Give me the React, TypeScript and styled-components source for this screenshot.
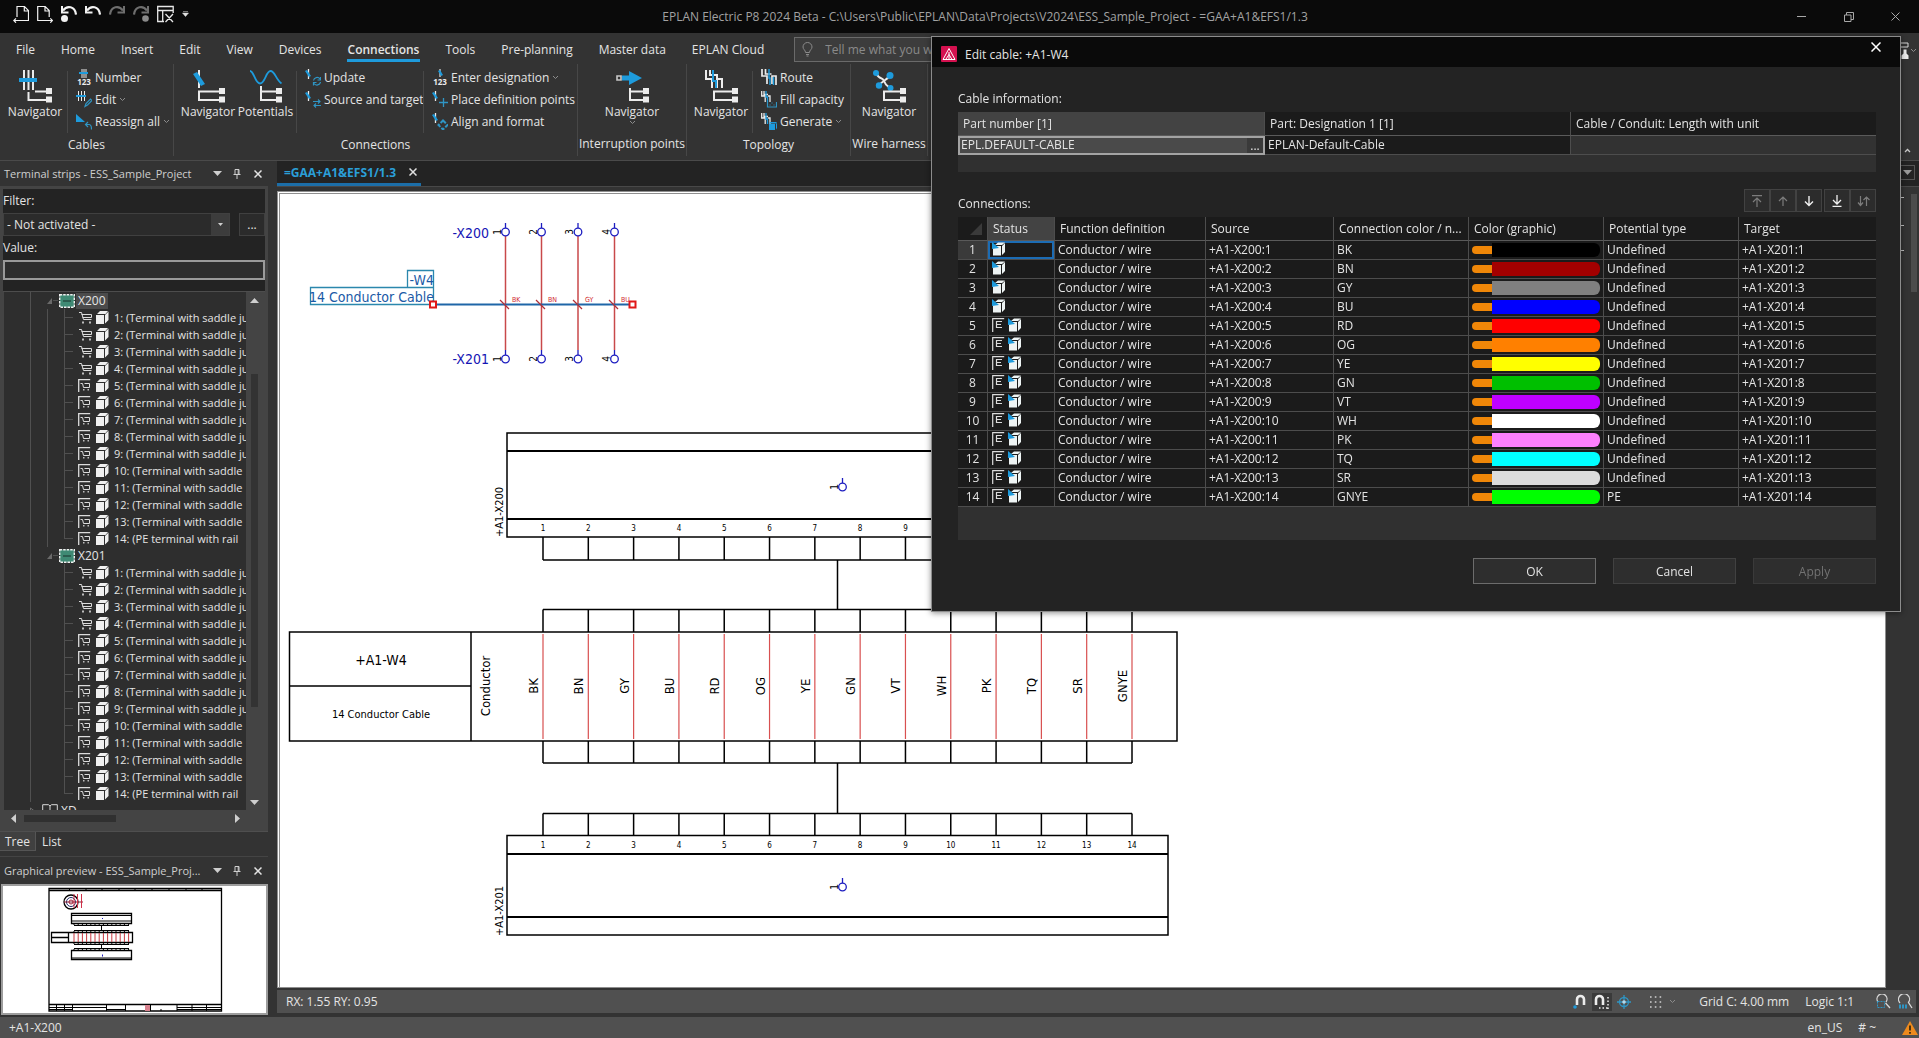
import React from "react";
import styled, { createGlobalStyle, css } from "styled-components";

const c = {
  black: "#0a0a0a",
  chrome: "#333333",
  deep: "#232323",
  cell: "#1b1b1b",
  tree: "#2e2e2e",
  frame: "#444444",
  status: "#505050",
  line: "#4d4d4d",
  text: "#e4e4e4",
  dim: "#8a8a8a",
  blue: "#1e9bdc",
  teal: "#2f95c4",
};

const GlobalStyle = createGlobalStyle`
  * { box-sizing: border-box; }
  body { margin: 0; background: ${c.chrome}; overflow: hidden; }
  body, button, input, select, table {
    font-family: "Open Sans", "Noto Sans", sans-serif;
    font-size: 12px;
    line-height: 17px;
    color: ${c.text};
  }
  button { background: none; border: 0; padding: 0; }
  svg { display: block; flex: none; }
`;

const Shell = styled.div`
  display: flex;
  flex-direction: column;
  height: 100vh;
  background: ${c.chrome};
  white-space: nowrap;
`;

/* ---------- title bar ---------- */

const TitleBar = styled.header`
  display: flex;
  height: 33px;
  background: ${c.black};
`;
const QuickAccess = styled.div`
  display: flex;
  gap: 8px;
  width: 192px;
  padding: 5px 0 0 13px;
`;
const AppTitle = styled.div`
  flex: 1;
  text-align: center;
  line-height: 33px;
  color: #a2a2a2;
`;
const CaptionButton = styled.button`
  display: flex;
  align-items: center;
  justify-content: center;
  width: 47px;
  color: #a8a8a8;
`;

/* ---------- ribbon ---------- */

const Ribbon = styled.div`
  height: 128px;
  border-bottom: 1px solid #4a4a4a;
  display: flex;
  flex-direction: column;
`;
const TabRow = styled.nav`
  display: flex;
  height: 31px;
  padding: 4px 0 0 3px;
`;
const RibbonTab = styled.button<{ $active?: boolean }>`
  display: flex;
  align-items: center;
  justify-content: center;
  padding: 2px 1px 0;
  margin: 0 12px;
  height: 25px;
  border-bottom: 3px solid ${(p) => (p.$active ? c.blue : "transparent")};
  font-weight: ${(p) => (p.$active ? 600 : 400)};
`;
const Search = styled.label`
  display: flex;
  align-items: center;
  gap: 12px;
  width: 320px;
  height: 25px;
  margin-left: 17px;
  padding-left: 7px;
  border: 1px solid #6a6a6a;
  background: #3c3c3c;
  color: ${c.dim};
`;
const SearchInput = styled.input`
  flex: 1;
  min-width: 0;
  border: 0;
  padding: 0;
  background: none;
  &::placeholder { color: ${c.dim}; }
`;
const Groups = styled.div`
  display: flex;
  height: 92px;
`;
const Group = styled.section<{ $w: number }>`
  display: flex;
  flex-direction: column;
  width: ${(p) => p.$w}px;
  border-right: 1px solid #474747;
`;
const GroupBody = styled.div<{ $center?: boolean }>`
  display: flex;
  height: 72px;
  padding: 2px 0 0 ${(p) => (p.$center ? 0 : 4)}px;
  justify-content: ${(p) => (p.$center ? "center" : "flex-start")};
`;
const GroupLabel = styled.div`
  text-align: center;
  line-height: 24px;
`;
const BigButton = styled.button<{ $w: number }>`
  display: flex;
  flex-direction: column;
  align-items: center;
  width: ${(p) => p.$w}px;
  padding-top: 4px;
`;
const ButtonStack = styled.div<{ $w: number }>`
  display: flex;
  flex-direction: column;
  width: ${(p) => p.$w}px;
`;
const Divider = styled.div<{ $before?: number }>`
  width: 1px;
  height: 62px;
  margin: 5px 0 0 ${(p) => p.$before ?? 0}px;
  background: #474747;
`;
const SmallButton = styled.button`
  display: flex;
  align-items: center;
  gap: 3px;
  height: 22px;
  padding-left: 8px;
`;
const RibbonEnd = styled.div`
  display: flex;
  flex-direction: column;
  justify-content: flex-end;
  align-items: center;
  margin-left: auto;
  width: 23px;
  padding-bottom: 3px;
  color: #c8c8c8;
`;
const UserButton = styled.button`
  display: flex;
  align-items: center;
  margin-left: auto;
  margin-right: 2px;
`;

/* ---------- body ---------- */

const Body = styled.main`
  display: flex;
  flex: 1;
  min-height: 0;
`;
const Dock = styled.aside`
  display: flex;
  flex-direction: column;
  width: 268px;
  margin-right: 9px;
  padding-bottom: 2px;
`;
const PanelTitle = styled.div<{ $h: number }>`
  display: flex;
  align-items: center;
  gap: 10px;
  height: ${(p) => p.$h}px;
  padding: 0 4px 0 4px;
  color: #cfcfcf;
`;
const PanelName = styled.span`
  flex: 1;
  min-width: 0;
  font-size: 11px;
`;
const IconButton = styled.button`
  display: flex;
  align-items: center;
  justify-content: center;
  width: 9px;
  height: 16px;
  &:last-child { width: 14px; margin-right: -1px; }
`;
const Frame = styled.div`
  display: flex;
  flex-direction: column;
  flex: 1;
  min-height: 0;
  border: solid ${c.frame};
  border-width: 3px 3px 0 3px;
`;
const FilterBox = styled.form`
  display: flex;
  flex-direction: column;
  height: 102px;
  background: ${c.deep};
`;
const FieldLabel = styled.label`
  line-height: 24px;
`;
const FieldRow = styled.div`
  display: flex;
  height: 23px;
  gap: 9px;
`;
const SelectWrap = styled.div`
  display: flex;
  align-items: center;
  flex: 1;
  border: 1px solid #404040;
  background: #2b2b2b;
`;
const Select = styled.select`
  flex: 1;
  appearance: none;
  border: 0;
  padding: 0 3px;
  background: none;
  outline: none;
`;
const SelectArrow = styled.div`
  display: flex;
  align-items: center;
  justify-content: center;
  width: 18px;
  align-self: stretch;
  background: #3c3c3c;
`;
const MoreButton = styled.button`
  width: 26px;
  border: 1px solid #404040;
  background: #2b2b2b;
`;
const ValueInput = styled.input`
  width: 100%;
  height: 20px;
  border: 2px solid #9a9a9a;
  background: #2e2e2e;
  outline: none;
`;
const TreeArea = styled.div`
  display: flex;
  flex: 1;
  min-height: 0;
  border-top: 1px solid ${c.line};
`;
const Tree = styled.ul`
  flex: 1;
  min-width: 0;
  margin: 0;
  padding: 0 0 0 26px;
  list-style: none;
  overflow: hidden;
  background: ${c.tree};
  border-left: 1px solid #444;
`;
const TreeRow = styled.li`
  display: flex;
  align-items: center;
  height: 17px;
`;
const Guide = styled.span<{ $v?: "full" | "half" | "none"; $tick?: boolean }>`
  flex: none;
  width: 17px;
  height: 17px;
  background:
    linear-gradient(#505050, #505050) 0 0 / 1px ${(p) => (p.$v === "half" ? "50%" : p.$v === "none" ? "0" : "100%")} no-repeat,
    linear-gradient(#505050, #505050) 0 50% / ${(p) => (p.$tick ? "9px" : "0")} 1px no-repeat;
`;
const NodeArrow = styled.span`
  display: flex;
  align-items: center;
  flex: none;
  width: 12px;
  height: 17px;
`;
const NodeName = styled.span<{ $selected?: boolean }>`
  padding: 0 2px;
  margin-left: 1px;
  line-height: 16px;
  background: ${(p) => (p.$selected ? "#4b4b4b" : "transparent")};
`;
const LeafName = styled.span`
  font-size: 11px;
`;
const LeafIcons = styled.span`
  display: flex;
  gap: 3px;
  margin-right: 5px;
  margin-left: -3px;
`;
const VScroll = styled.div`
  display: flex;
  flex-direction: column;
  align-items: center;
  width: 19px;
  padding: 6px 3px 5px 0;
  background: ${c.frame};
`;
const VThumb = styled.div`
  width: 7px;
  height: 333px;
  margin-top: 71px;
  margin-bottom: auto;
  background: #333;
`;
const HScroll = styled.div`
  display: flex;
  align-items: center;
  height: 21px;
  padding: 0 25px 4px 8px;
  background: ${c.frame};
`;
const HThumb = styled.div`
  width: 92px;
  height: 7px;
  margin-left: 8px;
  margin-right: auto;
  background: #303030;
`;
const ViewTabs = styled.div`
  display: flex;
  height: 25px;
  padding-bottom: 5px;
  border-top: 1px solid #4f4f4f;
`;
const ViewTab = styled.button<{ $active?: boolean }>`
  padding: 0 6px;
  ${(p) =>
    p.$active &&
    css`
      background: #404040;
      border: solid #555;
      border-width: 0 1px 1px 0;
      padding: 0 5px;
    `}
`;
const PreviewBox = styled.div`
  height: 131px;
  border: 2px solid #9d9d9d;
  background: #fff;
  overflow: hidden;
  margin-left: 1px;
`;
const PreviewPanel = styled.div`
  border-top: 1px solid #444;
`;

/* ---------- document ---------- */

const Doc = styled.section`
  display: flex;
  flex-direction: column;
  flex: 1;
  min-width: 0;
`;
const DocTabs = styled.div`
  display: flex;
  justify-content: space-between;
  height: 26px;
  border-bottom: 1px solid #484848;
  background: ${c.deep};
`;
const DocTab = styled.button`
  display: flex;
  align-items: center;
  gap: 13px;
  padding: 0 4px 0 7px;
  border-bottom: 3px solid #1c6ea8;
  font-weight: 700;
  color: #2b9fd8;
`;
const TabListButton = styled.button`
  display: flex;
  align-items: center;
  justify-content: center;
  width: 15px;
  height: 15px;
  margin: 4px 4px 0 0;
  border: 1px solid #555;
`;
const CanvasRow = styled.div`
  display: flex;
  flex: 1;
  min-height: 0;
  padding-top: 4px;
`;
const Canvas = styled.div`
  flex: 1;
  min-width: 0;
  border: solid #8e8e8e;
  border-width: 3px 1px 1px 3px;
  border-style: double solid solid double;
  background: #fff;
  overflow: hidden;
`;
const SideDock = styled.aside`
  display: flex;
  justify-content: flex-end;
  gap: 7px;
  width: 33px;
  padding: 3px 2px 0 0;
`;
const SideThumb = styled.div`
  width: 6px;
  height: 98px;
  background: #4c4c4c;
`;
const DocStatus = styled.div`
  display: flex;
  align-items: center;
  height: 23px;
  margin: 2px 3px 4px 0;
  padding: 0 3px 0 9px;
  background: ${c.status};
`;
const Spacer = styled.span`
  flex: 1;
`;
const StatusTools = styled.div`
  display: flex;
  align-items: center;
  gap: 2px;
  margin-right: 16px;
`;
const ToolToggle = styled.button<{ $on?: boolean }>`
  display: flex;
  align-items: center;
  justify-content: center;
  width: 20px;
  height: 18px;
  background: ${(p) => (p.$on ? "#3a3a3a" : "transparent")};
`;
const StatusText = styled.span<{ $gap: number }>`
  margin-right: ${(p) => p.$gap}px;
`;
const AppStatus = styled.footer`
  display: flex;
  align-items: center;
  height: 21px;
  padding: 0 1px 0 9px;
  background: ${c.status};
`;

/* ---------- dialog ---------- */

const Dialog = styled.div`
  position: fixed;
  top: 36px;
  right: 18px;
  width: 970px;
  display: flex;
  flex-direction: column;
  border: 1px solid #8c8c8c;
  background: ${c.deep};
  box-shadow: 0 1px 6px rgba(0, 0, 0, 0.45);
`;
const DialogTitle = styled.div`
  display: flex;
  align-items: center;
  gap: 8px;
  height: 30px;
  padding: 4px 19px 0 9px;
  background: ${c.black};
`;
const DialogClose = styled.button`
  margin: -14px 0 0 auto;
`;
const DialogBody = styled.div`
  display: flex;
  flex-direction: column;
  padding: 22px 24px 27px 26px;
`;
const SectionHead = styled.div<{ $h: number }>`
  display: flex;
  align-items: flex-end;
  justify-content: space-between;
  height: ${(p) => p.$h}px;
  padding-bottom: 5px;
`;
const SortBar = styled.div`
  display: flex;
`;
const SortButton = styled.button<{ $apart?: boolean; $off?: boolean }>`
  display: flex;
  align-items: center;
  justify-content: center;
  width: 26px;
  height: 23px;
  margin-left: ${(p) => (p.$apart ? 2 : 0)}px;
  border: 1px solid #424242;
  background: #2c2c2c;
  color: ${(p) => (p.$off ? "#7c7c7c" : "#f0f0f0")};
`;
const Grid = styled.div<{ $pad: number }>`
  padding-bottom: ${(p) => p.$pad}px;
  background: #303030;
`;
const Table = styled.table`
  width: 100%;
  table-layout: fixed;
  border-collapse: separate;
  border-spacing: 0;
`;
const HeadCell = styled.th<{ $hot?: boolean }>`
  height: 24px;
  padding: 0 5px;
  border-right: 1px solid ${c.line};
  border-bottom: 1px solid #5a5a5a;
  background: ${(p) => (p.$hot ? "#434343" : c.cell)};
  font-weight: 400;
  text-align: left;
  &:last-child { border-right: 0; }
`;
const Cell = styled.td<{ $blank?: boolean }>`
  height: 19px;
  padding: 0 3px;
  line-height: 18px;
  border-right: 1px solid ${c.line};
  border-bottom: 1px solid ${c.line};
  background: ${(p) => (p.$blank ? "#323232" : c.cell)};
  &:last-child { border-right: 0; }
`;
const RowHead = styled.th<{ $hot?: boolean }>`
  height: 19px;
  padding: 0;
  line-height: 18px;
  font-weight: 400;
  border-right: 1px solid ${c.line};
  border-bottom: 1px solid ${c.line};
  background: ${(p) => (p.$hot ? "#3a3a3a" : c.cell)};
`;
const StatusCell = styled(Cell)<{ $focus?: boolean }>`
  padding: 0 4px;
  box-shadow: ${(p) => (p.$focus ? "inset 0 0 0 2px #1c6cb4" : "none")};
`;
const StatusIcons = styled.div`
  display: flex;
  gap: 3px;
  height: 18px;
  padding-top: 1px;
`;
const EditCell = styled.td`
  height: 19px;
  padding: 0;
  background: #4a4a4a;
`;
const EditBox = styled.div`
  display: flex;
  height: 19px;
  border: 2px solid #a3a3a3;
`;
const EditInput = styled.input`
  flex: 1;
  min-width: 0;
  height: 14px;
  line-height: 14px;
  border: 0;
  padding: 0 1px;
  background: none;
  outline: none;
`;
const EditMore = styled.button`
  width: 16px;
  line-height: 13px;
  background: #3a3a3a;
`;
const Wire = styled.div`
  display: flex;
  align-items: center;
  height: 18px;
`;
const WireTip = styled.span`
  width: 20px;
  height: 8px;
  border-radius: 4px 0 0 4px;
  background: #f08708;
`;
const WireBody = styled.span<{ $color: string }>`
  flex: 1;
  height: 14px;
  border-radius: 0 6px 6px 0;
  background: ${(p) => p.$color};
`;
const Actions = styled.div`
  display: flex;
  justify-content: flex-end;
  gap: 17px;
  padding-top: 18px;
`;
const ActionButton = styled.button<{ $primary?: boolean }>`
  width: 123px;
  height: 26px;
  border: 1px solid ${(p) => (p.$primary ? "#6c6c6c" : "#414141")};
  background: #2e2e2e;
  &:disabled { color: #737373; border-color: #3a3a3a; }
`;

/* ---------- icons ---------- */

const Svg = ({ w, h, children }: { w: number; h: number; children: React.ReactNode }) => (
  <svg width={w} height={h} viewBox={`0 0 ${w} ${h}`} fill="none" aria-hidden="true">
    {children}
  </svg>
);

const Down = ({ w = 9, h = 5, fill = "#cfcfcf" }) => (
  <Svg w={w} h={h}>
    <path d={`M0 0H${w}L${w / 2} ${h}Z`} fill={fill} />
  </Svg>
);
const Chevron = () => (
  <Svg w={7} h={5}>
    <path d="M1 1l2.5 2.5L6 1" stroke="#8c8c8c" />
  </Svg>
);
const Cross = ({ s = 8, stroke = "currentColor", sw = 1.5 }) => (
  <Svg w={s} h={s}>
    <path d={`M.5 .5L${s - 0.5} ${s - 0.5}M${s - 0.5} .5L.5 ${s - 0.5}`} stroke={stroke} strokeWidth={sw} />
  </Svg>
);
const Pin = () => (
  <Svg w={8} h={10}>
    <path d="M2 .5h4v5H2zM5.2 .5v5M.5 5.5h7M4 5.5V10" stroke="#cfcfcf" />
  </Svg>
);

const PageIcon = ({ next }: { next?: boolean }) => (
  <Svg w={16} h={18}>
    {next ? (
      <path d="M11.5 15.5H.7V1.5h7.500l4 4V12M8 1.500V6h4M8 15.500h7.500M13.300 13.300l2.200 2.200-2.200 2.200" stroke="#f2f2f2" strokeWidth="1.2" />
    ) : (
      <path d="M4 12V1.500h7.500l4 4v10H1M11.300 1.500V6h4M3 13.300L.8 15.500 3 17.700" stroke="#f2f2f2" strokeWidth="1.2" />
    )}
  </Svg>
);
const UndoIcon = ({ dot }: { dot?: boolean }) => (
  <Svg w={16} h={18}>
    <path d="M2 5.500C6 0 14 1 15 9.500" stroke="#f2f2f2" strokeWidth="2.200" />
    <path d="M1 1v6.500H7.500" stroke="#f2f2f2" strokeWidth="2" />
    {dot && <circle cx="3.500" cy="13.500" r="3.500" fill="#f2f2f2" />}
  </Svg>
);
const RedoIcon = ({ dot }: { dot?: boolean }) => (
  <Svg w={16} h={18}>
    <path d="M14 5.500C10 0 2 1 1 9.500" stroke="#6e6e6e" strokeWidth="2.200" />
    <path d="M15 1v6.500H8.500" stroke="#6e6e6e" strokeWidth="2" />
    {dot && <circle cx="12.500" cy="13.500" r="3.300" fill="#8a8a8a" />}
  </Svg>
);
const CloseLayoutIcon = () => (
  <Svg w={17} h={18}>
    <path d="M7 16.500H.7V1.500h15.500V8M.7 5.500h15.500M5.700 5.500v11M8.500 9l7.500 8M16 9l-7.500 8" stroke="#e8e8e8" strokeWidth="1.300" />
  </Svg>
);

/* tree of two nodes that stands in the lower right of the big ribbon icons */
const Prongs = ({ x, top = 18, upper = x }: { x: number; top?: number; upper?: number }) => (
  <>
    <path d={`M${x} ${top}V30H27M${upper} 21.500H27`} stroke="#ececec" strokeWidth="2" />
    <path d="M27 18h6v6h-6zM27 26.500h6v6h-6z" fill="#ececec" />
  </>
);
const CableBig = () => (
  <Svg w={33} h={33}>
    <path d="M5 0v20M9.500 0v20M14 0v20" stroke="#ececec" strokeWidth="2" />
    <path d="M0 8h18v4H0z" fill={c.blue} />
    <Prongs x={9.5} top={22} upper={16} />
  </Svg>
);
const ConnBig = () => (
  <Svg w={33} h={33}>
    <path d="M7 0v18" stroke="#ececec" strokeWidth="2" />
    <path d="M1 4l4-2 8 12-4 2z" fill={c.blue} />
    <Prongs x={7} top={20.5} />
  </Svg>
);
const PotentialBig = () => (
  <Svg w={33} h={33}>
    <path d="M1 1c4 0 5 12.500 10 12.500S17 1 21.500 1 27 10 32.500 13.500" stroke={c.blue} strokeWidth="1.800" />
    <Prongs x={12} top={16} />
  </Svg>
);
const InterruptBig = () => (
  <Svg w={33} h={33}>
    <path d="M1 6h4v4H1z" stroke="#c8c8c8" strokeWidth="1.600" />
    <path d="M6 5.500h7V1l13 7-13 7v-4.500H6z" fill={c.blue} />
    <Prongs x={14} />
  </Svg>
);
const TopologyBig = () => (
  <Svg w={33} h={33}>
    <path d="M1 0v9h6v9M5 0v5h7v4M17 18V9h-5v9" stroke="#ececec" strokeWidth="2" />
    <path d="M8 0v11h3v7" stroke={c.blue} strokeWidth="2" />
    <Prongs x={9} top={20.5} />
  </Svg>
);
const HarnessBig = () => (
  <Svg w={33} h={33}>
    <path d="M3 3c4 8 6 3 8 8s6 7 7 6M17 5c-3 6-8 5-11 11" stroke="#ececec" strokeWidth="2" />
    <g fill={c.blue}>
      <circle cx="3" cy="3" r="3" />
      <circle cx="17" cy="5.500" r="3.500" />
      <circle cx="6" cy="15.500" r="3.200" />
      <circle cx="17.500" cy="18" r="3" />
    </g>
    <Prongs x={11} top={20.5} />
  </Svg>
);

const MiniCable = () => (
  <>
    <path d="M2.500 0v10M5.500 0v10M8.500 0v10" stroke="#ececec" />
    <path d="M0 4h10v2H0z" fill={c.blue} />
  </>
);
const MiniConn = () => (
  <>
    <path d="M3.500 0v10" stroke="#ececec" strokeWidth="1.300" />
    <path d="M0 2l2-1 4 6-2 1z" fill={c.blue} />
  </>
);
const MiniRoute = () => (
  <>
    <path d="M.7 0v5h3.500v6M3 0v3.500h4M9 11V5H7" stroke="#ececec" strokeWidth="1.300" />
    <path d="M5 0v6h1.500v5" stroke={c.blue} strokeWidth="1.300" />
  </>
);
const OneTwoThree = () => (
  <text x="8" y="16" fontSize="8" fontWeight="700" textAnchor="middle" fill="#ececec">123</text>
);
const S = ({ children }: { children: React.ReactNode }) => <Svg w={16} h={17}>{children}</Svg>;

const smallIcons: Record<string, React.ReactNode> = {
  number: (
    <S>
      <g transform="translate(3 0)"><path d="M3 0v9M5 0v9M7 0v9" stroke="#ececec" /><path d="M0 3h9v2H0z" fill={c.blue} /></g>
      <OneTwoThree />
    </S>
  ),
  edit: (
    <S>
      <MiniCable />
      <path d="M9 15.500l1-3 4.500-4.500 1.500 1.500-4.500 4.500z" stroke={c.teal} strokeWidth="1.200" />
    </S>
  ),
  reassign: (
    <S>
      <path d="M0 1l9 8H0z" fill={c.blue} />
      <path d="M10 11.500h3c2.500 0 2.500 3 2.500 5M12 9l-2.500 2.500 2.500 2.500" stroke={c.teal} strokeWidth="1.200" />
    </S>
  ),
  update: (
    <S>
      <MiniConn />
      <path d="M8.500 11.500a3.600 3.600 0 0 1 6.500-1.500M15.500 8v3h-3M15.500 13a3.600 3.600 0 0 1-6.500 1.500M8.500 16.500v-3h3" stroke={c.teal} strokeWidth="1.200" />
    </S>
  ),
  source: (
    <S>
      <MiniConn />
      <path d="M8 10.500h7M13 8.500l2 2-2 2M16 14.500H9M11 12.500l-2 2 2 2" stroke={c.teal} strokeWidth="1.100" />
    </S>
  ),
  enter: (
    <S>
      <g transform="translate(5 0)"><path d="M3 0v8" stroke="#9a9a9a" strokeWidth="2" /><path d="M1 2l2-1 3 5-2 1z" fill={c.blue} /></g>
      <OneTwoThree />
    </S>
  ),
  place: (
    <S>
      <MiniConn />
      <path d="M11.500 7v9M7 11.500h9" stroke={c.teal} strokeWidth="1.300" />
    </S>
  ),
  align: (
    <S>
      <MiniConn />
      <path d="M11 7.500l4.500 4.500-4.500 4.500L6.500 12z" stroke={c.teal} strokeWidth="2" strokeDasharray="4 1.500" />
    </S>
  ),
  route: (
    <S>
      <path d="M1 0v7h5v8M4.500 0v5h6M15 16V7h-4v8" stroke="#ececec" strokeWidth="1.700" />
      <path d="M8 0v9h1v7M12.500 8v8" stroke={c.blue} strokeWidth="1.500" />
    </S>
  ),
  fill: (
    <S>
      <MiniRoute />
      <path d="M6.500 11v5h9v-5M8.500 14h1m1-2h1m1 2h1" stroke={c.teal} strokeWidth="1.200" />
    </S>
  ),
  generate: (
    <S>
      <MiniRoute />
      <path d="M8 11h6v6H8zM9 9h7l-1.500 1.500H8zM15 11l1-1.500V15l-1 1.500z" fill={c.blue} />
    </S>
  ),
};

const Cart = () => (
  <Svg w={15} h={13}>
    <path d="M1 1.500h2.500l2 7h8M3.500 3.500h10v3h-9" stroke="#dcdcdc" />
    <path d="M4 10.500h2v2H4zM11 10.500h2v2h-2z" fill="#bdbdbd" />
  </Svg>
);
const CartFramed = () => (
  <Svg w={15} h={13}>
    <path d="M.7 13V.7h11.500" stroke="#dcdcdc" strokeWidth="1.300" />
    <path d="M2.500 4.500h2l1 4h6v-4h-5" stroke="#dcdcdc" />
    <path d="M5 10h1.500v1.500H5zM9.500 10h1.500v1.500H9.500z" fill="#bdbdbd" />
  </Svg>
);
const Cube = () => (
  <Svg w={13} h={13}>
    <path d="M0 4h8v9H0zM1 3l3-3h8L9.500 3zM9 4l3.500-3.500V9L9 12.500z" fill="#f0f0f0" />
  </Svg>
);
const ConnCube = () => (
  <Svg w={14} h={14}>
    <path d="M1 4h8v9.500H1zM3 3l3-2.500h7L10 3zM10 4l3-3v9l-3 3z" fill="#eef4f4" />
    <path d="M0 0v7l7-1z" fill={c.blue} />
  </Svg>
);
const BoxedC = () => (
  <Svg w={13} h={14}>
    <path d="M.7 14V.7h11.500M10 3.500H4.500v6H10M4.500 6.500H9" stroke="#dcdcdc" strokeWidth="1.200" />
  </Svg>
);
const StripIcon = () => (
  <Svg w={16} h={14}>
    <path d="M.7 .7h14.600v12.600H.7z" fill="#3f8a74" stroke="#f0f0f0" strokeWidth="1.400" strokeDasharray="2.500 1" />
    <path d="M4 7h8" stroke="#1f3f36" strokeWidth="1.200" />
  </Svg>
);
const BookIcon = () => (
  <Svg w={16} h={13}>
    <path d="M8 12V2L6.500 .7H.7V11H6l2 1.500L10 11h5.300V.7H9.500L8 2" stroke="#d8d8d8" />
  </Svg>
);

/* ---------- the wiring drawing ---------- */

const Terminal = ({ x, y, name }: { x: number; y: number; name: string }) => (
  <g>
    <circle cx={x} cy={y} r="3.8" stroke="#1d1dc0" strokeWidth="1.300" fill="#fff" />
    <path d={`M${x} ${y - 9}V${y - 4}`} stroke="#1d1dc0" strokeWidth="1.300" />
    <text transform={`translate(${x - 5} ${y}) rotate(-90)`} textAnchor="middle" fontSize="10" fill="#000">{name}</text>
  </g>
);

const colors = ["BK", "BN", "GY", "BU", "RD", "OG", "YE", "GN", "VT", "WH", "PK", "TQ", "SR", "GNYE"];
const pinX = colors.map((_, i) => 543 + (i * 589) / 13);

const Comb = ({ y1, y2, bar }: { y1: number; y2: number; bar: number }) => (
  <path d={`M543 ${bar}H1132` + pinX.map((x) => `M${x} ${y1}V${y2}`).join("")} stroke="#000" strokeWidth="1.500" />
);

const Drawing = () => (
  <svg width="1605" height="792" fill="none" fontFamily='"DejaVu Sans Condensed", "Noto Sans", "Open Sans", sans-serif'>
    <g transform="translate(-280 -194)">
      <g fill="#1414b4" fontSize="14">
        <text x="489" y="238" textAnchor="end">-X200</text>
        <text x="489" y="364" textAnchor="end">-X201</text>
      </g>
      {[505.5, 541.5, 578, 614.5].map((x, i) => (
        <g key={x}>
          <path d={`M${x} 236V350`} stroke="#c8484a" strokeWidth="1.500" />
          <Terminal x={x} y={232} name={String(i + 1)} />
          <Terminal x={x} y={359} name={String(i + 1)} />
        </g>
      ))}
      <path d="M433 304.500H632" stroke="#1f66a8" strokeWidth="2" />
      {[505, 541, 578, 614].map((x, i) => (
        <g key={x}>
          <path d={`M${x - 5} 300l9 9`} stroke="#b03038" strokeWidth="1.200" />
          <text x={x + 7} y="302" fontSize="7" fill="#d02830">{colors[i]}</text>
        </g>
      ))}
      <path d="M407.500 270.500h26v17h-26zM310.500 287.500h123v17h-123z" stroke="#2b87ad" strokeWidth="1.300" />
      <g fill="#1b5aa6" fontSize="14" textAnchor="end">
        <text x="434" y="285">-W4</text>
        <text x="434" y="302">14 Conductor Cable</text>
      </g>
      <path d="M430 301.500h6v6h-6zM629.500 301.500h6v6h-6z" fill="#fff" stroke="#e01818" strokeWidth="2" />

      <g stroke="#000" strokeWidth="1.500">
        <path d="M507 433H1168V537H507ZM507 835.500H1168V935H507ZM289.500 632H1177V741H289.500ZM471 632V741M289.500 686H471" />
        <path d="M507 451H1168M507 519H1168M507 854H1168M507 917H1168" strokeWidth="2" />
        <path d="M837.500 560V609.500M837.500 763V813.500" />
      </g>
      <Comb y1={537} y2={560} bar={560} />
      <Comb y1={609.5} y2={632} bar={609.5} />
      <Comb y1={741} y2={763} bar={763} />
      <Comb y1={813.5} y2={835} bar={813.5} />
      <path d={pinX.map((x) => `M${x} 634V739`).join("")} stroke="#d85050" strokeWidth="1.200" />

      <g fill="#000" textAnchor="middle">
        {colors.map((name, i) => (
          <g key={name}>
            <text x={pinX[i]} y="531" fontSize="8">{i + 1}</text>
            <text x={pinX[i]} y="848" fontSize="8">{i + 1}</text>
            <text transform={`translate(${pinX[i] - 5} 686) rotate(-90)`} fontSize="13">{name}</text>
          </g>
        ))}
        <text x="381" y="665" fontSize="14">+A1-W4</text>
        <text x="381" y="718" fontSize="11">14 Conductor Cable</text>
        <text transform="translate(490 686) rotate(-90)" fontSize="13">Conductor</text>
      </g>
      <g fill="#000" fontSize="11">
        <text transform="translate(503 537) rotate(-90)">+A1-X200</text>
        <text transform="translate(503 936) rotate(-90)">+A1-X201</text>
      </g>
      <Terminal x={842.5} y={487} name="1" />
      <Terminal x={842.5} y={887} name="1" />
    </g>
  </svg>
);

const miniX = Array.from({ length: 14 }, (_, i) => 74 + i * 4.2);
const Preview = () => (
  <svg width="263" height="127" fill="none" stroke="#000">
    <g transform="translate(-3 -886)">
      <path d="M49 888.500H221.500V1011H49ZM49 890.500H221.500M49 1004.500H221.500" strokeWidth="1.300" />
      <path d="M69.500 888v3M86 888v3M102 888v3M119 888v3M135 888v3M152 888v3M169 888v3M186 888v3M202 888v3M56.500 1004v7M64.500 1004v7M72.500 1004v7M106.500 1004v7M125.500 1004v7M150.500 1004v7M161 1009v2M177 1004v7M192 1004v7M206.500 1004v7M49 1007.500h57M49 1009.500h24M177 1007.500h44" />
      <path d="M106 1009.500h20M177 1009.500h44" />
      <path d="M145 1005h5v6h-5z" fill="#d9828f" stroke="none" />
      <circle cx="71" cy="902" r="7" strokeWidth="1.300" />
      <circle cx="71" cy="902" r="4.500" stroke="#222a66" />
      <circle cx="71" cy="902" r="2" stroke="#a02038" />
      <path d="M64 902h19" stroke="#8a2038" />
      <path d="M74 894v14M77.500 894v14M81.500 894v14" stroke="#d03048" />
      <path d="M71.500 913.500h60v10h-60zM71.500 950.500h60v9h-60zM51.500 932.500h81v10h-81zM68.500 932v10M51 937.500h17" strokeWidth="1.300" />
      <path d="M71 915.500h60M71 921h60M71 958h60M101.500 926v4M101.500 945v3" />
      <path d={"M74 925.500h55M74 930.500h55M74 944.500h55M74 948.500h55" + miniX.map((x) => `M${x} 924v1M${x} 931v1M${x} 943v1M${x} 949v1`).join("")} />
      <path d={miniX.map((x) => `M${x} 933v9`).join("")} stroke="#c83a42" />
      <path d="M102.500 918v1M102.500 954.500v2" stroke="#1d1dc0" />
    </g>
  </svg>
);

/* ---------- data ---------- */

const swatches = ["#000000", "#a30000", "#808080", "#0000ff", "#ff0000", "#ff8000", "#ffff00", "#00bf00", "#bf00ff", "#ffffff", "#ff80ff", "#00ffff", "#dcdcdc", "#00ff00"];
const connections = colors.map((code, i) => ({
  n: i + 1,
  code,
  swatch: swatches[i],
  boxed: i > 3,
  potential: code === "GNYE" ? "PE" : "Undefined",
}));

const Big = ({ icon, w, label, more }: { icon: React.ReactNode; w: number; label: string; more?: boolean }) => (
  <BigButton $w={w} type="button">
    {icon}
    <span>{label}</span>
    {more && <Chevron />}
  </BigButton>
);
const Small = ({ icon, label, more }: { icon: string; label: string; more?: boolean }) => (
  <SmallButton type="button">
    {smallIcons[icon]}
    <span>{label}</span>
    {more && <Chevron />}
  </SmallButton>
);

const StripNode = ({ name, selected, last }: { name: string; selected?: boolean; last?: boolean }) => (
  <>
    <TreeRow>
      <Guide $v="full" />
      <NodeArrow>
        <Svg w={12} h={17}>
          <path d="M5 6v6H0z" fill="#6a6a6a" />
          <path d="M6 8.500h5" stroke="#505050" />
        </Svg>
      </NodeArrow>
      <StripIcon />
      <NodeName $selected={selected}>{name}</NodeName>
    </TreeRow>
    {Array.from({ length: 14 }, (_, i) => (
      <TreeRow key={i}>
        <Guide $v="full" />
        <Guide $v={last ? "none" : "full"} />
        <Guide $v={i === 13 ? "half" : "full"} $tick />
        <LeafIcons>
          {i < 4 ? <Cart /> : <CartFramed />}
          <Cube />
        </LeafIcons>
        <LeafName>{i === 13 ? "14: (PE terminal with rail" : `${i + 1}: (Terminal with saddle${i < 9 ? " ju" : ""}`}</LeafName>
      </TreeRow>
    ))}
  </>
);

const PanelButtons = ({ name }: { name: string }) => (
  <>
    <IconButton type="button" aria-label={`${name} menu`}><Down /></IconButton>
    <IconButton type="button" aria-label={`Pin ${name}`}><Pin /></IconButton>
    <IconButton type="button" aria-label={`Close ${name}`}><Cross /></IconButton>
  </>
);

const tabs = ["File", "Home", "Insert", "Edit", "View", "Devices", "Connections", "Tools", "Pre-planning", "Master data", "EPLAN Cloud"];

const EditCableDialog = () => (
  <Dialog role="dialog" aria-labelledby="dialog-title">
    <DialogTitle>
      <Svg w={16} h={16}>
        <rect width="16" height="16" rx="1" fill="#d4114f" />
        <path d="M8 2.500L2 13.500h12zM8 6v3M8 8.500L5 13M8 8.500l3 5M8 10v3.500" stroke="#fff" />
      </Svg>
      <span id="dialog-title">Edit cable: +A1-W4</span>
      <DialogClose type="button" aria-label="Close dialog"><Cross s={10} stroke="#fff" /></DialogClose>
    </DialogTitle>
    <DialogBody>
      <SectionHead $h={23}><span>Cable information:</span></SectionHead>
      <Grid $pad={17}>
        <Table>
          <colgroup><col width="307" /><col width="306" /><col /></colgroup>
          <thead>
            <tr>
              <HeadCell $hot scope="col">Part number [1]</HeadCell>
              <HeadCell scope="col">Part: Designation 1 [1]</HeadCell>
              <HeadCell scope="col">Cable / Conduit: Length with unit</HeadCell>
            </tr>
          </thead>
          <tbody>
            <tr>
              <EditCell>
                <EditBox>
                  <EditInput aria-label="Part number" defaultValue="EPL.DEFAULT-CABLE" />
                  <EditMore type="button">...</EditMore>
                </EditBox>
              </EditCell>
              <Cell>EPLAN-Default-Cable</Cell>
              <Cell $blank />
            </tr>
          </tbody>
        </Table>
      </Grid>
      <SectionHead $h={45}>
        <span>Connections:</span>
        <SortBar>
          <SortButton type="button" $off aria-label="Move to top"><Svg w={12} h={12}><path d="M1 .7h10M6 12V3M2 7l4-4 4 4" stroke="currentColor" strokeWidth="1.200" /></Svg></SortButton>
          <SortButton type="button" $off aria-label="Move up"><Svg w={12} h={12}><path d="M6 11V2M2 6l4-4 4 4" stroke="currentColor" strokeWidth="1.200" /></Svg></SortButton>
          <SortButton type="button" aria-label="Move down"><Svg w={12} h={12}><path d="M6 1v9M2 6.500l4 4 4-4" stroke="currentColor" strokeWidth="1.400" /></Svg></SortButton>
          <SortButton type="button" $apart aria-label="Move to bottom"><Svg w={12} h={12}><path d="M1.500 11.300h9M6 0v9M2 5l4 4 4-4" stroke="currentColor" strokeWidth="1.300" /></Svg></SortButton>
          <SortButton type="button" $off aria-label="Swap"><Svg w={13} h={12}><path d="M3.500 1v9M1 7.500l2.500 3 2.500-3M9.500 11V2M6.500 5l3-3 3 3" stroke="currentColor" strokeWidth="1.200" /></Svg></SortButton>
        </SortBar>
      </SectionHead>
      <Grid $pad={33}>
        <Table>
          <colgroup>
            <col width="30" /><col width="67" /><col width="151" /><col width="128" />
            <col width="135" /><col width="135" /><col width="135" /><col />
          </colgroup>
          <thead>
            <tr>
              <HeadCell aria-label="Row"><Svg w={19} h={12}><path d="M19 0v12H7z" fill="#3a3a3a" /></Svg></HeadCell>
              <HeadCell $hot scope="col">Status</HeadCell>
              <HeadCell scope="col">Function definition</HeadCell>
              <HeadCell scope="col">Source</HeadCell>
              <HeadCell scope="col">Connection color / n...</HeadCell>
              <HeadCell scope="col">Color (graphic)</HeadCell>
              <HeadCell scope="col">Potential type</HeadCell>
              <HeadCell scope="col">Target</HeadCell>
            </tr>
          </thead>
          <tbody>
            {connections.map((r) => (
              <tr key={r.n}>
                <RowHead scope="row" $hot={r.n === 1}>{r.n}</RowHead>
                <StatusCell $focus={r.n === 1}>
                  <StatusIcons>{r.boxed && <BoxedC />}<ConnCube /></StatusIcons>
                </StatusCell>
                <Cell>Conductor / wire</Cell>
                <Cell>+A1-X200:{r.n}</Cell>
                <Cell>{r.code}</Cell>
                <Cell><Wire><WireTip /><WireBody $color={r.swatch} /></Wire></Cell>
                <Cell>{r.potential}</Cell>
                <Cell>+A1-X201:{r.n}</Cell>
              </tr>
            ))}
          </tbody>
        </Table>
      </Grid>
      <Actions>
        <ActionButton type="button" $primary>OK</ActionButton>
        <ActionButton type="button">Cancel</ActionButton>
        <ActionButton type="button" disabled>Apply</ActionButton>
      </Actions>
    </DialogBody>
  </Dialog>
);

export default function App() {
  return (
    <Shell>
      <GlobalStyle />
      <TitleBar>
        <QuickAccess>
          <PageIcon />
          <PageIcon next />
          <UndoIcon dot />
          <UndoIcon />
          <RedoIcon />
          <RedoIcon dot />
          <CloseLayoutIcon />
          <Svg w={7} h={12}><path d="M1 6.500h5M.5 8h6L3.500 11.500z" stroke="#e0e0e0" fill="#e0e0e0" strokeWidth=".5" /></Svg>
        </QuickAccess>
        <AppTitle>EPLAN Electric P8 2024 Beta - C:\Users\Public\EPLAN\Data\Projects\V2024\ESS_Sample_Project - =GAA+A1&amp;EFS1/1.3</AppTitle>
        <CaptionButton type="button" aria-label="Minimize"><Svg w={9} h={9}><path d="M0 4.500h9" stroke="currentColor" /></Svg></CaptionButton>
        <CaptionButton type="button" aria-label="Restore"><Svg w={10} h={10}><path d="M.5 3h6.500v6.500H.5zM2.500 3V.5h7v7H7" stroke="currentColor" /></Svg></CaptionButton>
        <CaptionButton type="button" aria-label="Close"><Cross s={9} sw={1} /></CaptionButton>
      </TitleBar>

      <Ribbon>
        <TabRow>
          {tabs.map((t) => (
            <RibbonTab key={t} type="button" $active={t === "Connections"}>{t}</RibbonTab>
          ))}
          <Search>
            <Svg w={11} h={15}>
              <path d="M3.500 10.500C3.500 8 1 7.500 1 5a4.500 4.500 0 0 1 9 0c0 2.500-2.500 3-2.500 5.500zM4 12.500h3M4.500 14h2" stroke="#8a8a8a" />
            </Svg>
            <SearchInput aria-label="Search commands" placeholder="Tell me what you want to do" />
          </Search>
          <UserButton type="button" aria-label="User">
            <Svg w={10} h={17}>
              <path d="M0 1h8v4H0" stroke="#d8d8d8" />
              <path d="M3.500 7.500h3v4l2 2V17h-7v-3.500l2-2z" fill="#ececec" />
            </Svg>
            <Chevron />
          </UserButton>
        </TabRow>
        <Groups>
          <Group $w={174}>
            <GroupBody>
              <Big icon={<CableBig />} w={62} label="Navigator" />
              <Divider $before={1} />
              <ButtonStack $w={105}>
                <Small icon="number" label="Number" />
                <Small icon="edit" label="Edit" more />
                <Small icon="reassign" label="Reassign all" more />
              </ButtonStack>
            </GroupBody>
            <GroupLabel>Cables</GroupLabel>
          </Group>
          <Group $w={404}>
            <GroupBody>
              <Big icon={<ConnBig />} w={60} label="Navigator" />
              <Big icon={<PotentialBig />} w={55} label="Potentials" />
              <Divider $before={3} />
              <ButtonStack $w={126}>
                <Small icon="update" label="Update" />
                <Small icon="source" label="Source and target" />
              </ButtonStack>
              <Divider />
              <ButtonStack $w={152}>
                <Small icon="enter" label="Enter designation" more />
                <Small icon="place" label="Place definition points" />
                <Small icon="align" label="Align and format" />
              </ButtonStack>
            </GroupBody>
            <GroupLabel>Connections</GroupLabel>
          </Group>
          <Group $w={109}>
            <GroupBody $center>
              <Big icon={<InterruptBig />} w={70} label="Navigator" more />
            </GroupBody>
            <GroupLabel>Interruption points</GroupLabel>
          </Group>
          <Group $w={164}>
            <GroupBody>
              <Big icon={<TopologyBig />} w={60} label="Navigator" />
              <Divider $before={1} />
              <ButtonStack $w={96}>
                <Small icon="route" label="Route" />
                <Small icon="fill" label="Fill capacity" />
                <Small icon="generate" label="Generate" more />
              </ButtonStack>
            </GroupBody>
            <GroupLabel>Topology</GroupLabel>
          </Group>
          <Group $w={77}>
            <GroupBody $center>
              <Big icon={<HarnessBig />} w={70} label="Navigator" />
            </GroupBody>
            <GroupLabel>Wire harness</GroupLabel>
          </Group>
          <RibbonEnd>
            <Svg w={7} h={5}><path d="M1 4l2.500-2.500L6 4" stroke="currentColor" strokeWidth="1.300" /></Svg>
          </RibbonEnd>
        </Groups>
      </Ribbon>

      <Body>
        <Dock>
          <PanelTitle $h={25}>
            <PanelName>Terminal strips - ESS_Sample_Project</PanelName>
            <PanelButtons name="Terminal strips" />
          </PanelTitle>
          <Frame>
            <FilterBox>
              <FieldLabel htmlFor="filter">Filter:</FieldLabel>
              <FieldRow>
                <SelectWrap>
                  <Select id="filter"><option>- Not activated -</option></Select>
                  <SelectArrow><Down w={5} h={3} /></SelectArrow>
                </SelectWrap>
                <MoreButton type="button">...</MoreButton>
              </FieldRow>
              <FieldLabel htmlFor="value">Value:</FieldLabel>
              <ValueInput id="value" />
            </FilterBox>
            <TreeArea>
              <Tree>
                <StripNode name="X200" selected />
                <StripNode name="X201" last />
                <TreeRow>
                  <NodeArrow><Svg w={6} h={8}><path d="M.5 1l4 3-4 3z" stroke="#6a6a6a" /></Svg></NodeArrow>
                  <BookIcon />
                  <NodeName>XD</NodeName>
                </TreeRow>
              </Tree>
              <VScroll>
                <Svg w={9} h={5}><path d="M0 5h9L4.500 0z" fill="#cfcfcf" /></Svg>
                <VThumb />
                <Down />
              </VScroll>
            </TreeArea>
            <HScroll>
              <Svg w={5} h={9}><path d="M5 0v9L0 4.500z" fill="#cfcfcf" /></Svg>
              <HThumb />
              <Svg w={5} h={9}><path d="M0 0v9l5-4.500z" fill="#cfcfcf" /></Svg>
            </HScroll>
          </Frame>
          <ViewTabs>
            <ViewTab type="button" $active>Tree</ViewTab>
            <ViewTab type="button">List</ViewTab>
          </ViewTabs>
          <PreviewPanel>
            <PanelTitle $h={27}>
              <PanelName>Graphical preview - ESS_Sample_Proj...</PanelName>
              <PanelButtons name="Graphical preview" />
            </PanelTitle>
            <PreviewBox><Preview /></PreviewBox>
          </PreviewPanel>
        </Dock>

        <Doc>
          <DocTabs>
            <DocTab type="button">=GAA+A1&amp;EFS1/1.3<Cross s={8} stroke="#e0e0e0" /></DocTab>
            <TabListButton type="button" aria-label="Open documents"><Down fill="#9a9a9a" /></TabListButton>
          </DocTabs>
          <CanvasRow>
            <Canvas><Drawing /></Canvas>
            <SideDock>
              <Svg w={4} h={98}><path d="M0 3.500h4M0 31.500h4M0 56.500h4" stroke="#c0c0c0" /></Svg>
              <SideThumb />
            </SideDock>
          </CanvasRow>
          <DocStatus>
            <span>RX: 1.55 RY: 0.95</span>
            <Spacer />
            <StatusTools>
              <ToolToggle type="button" aria-label="Snap to object">
                <Svg w={14} h={15}><path d="M4 11V5.500a3.500 3.500 0 0 1 7 0V11" stroke="#ececec" strokeWidth="2.600" /><circle cx="2" cy="13" r="1.800" fill={c.blue} /></Svg>
              </ToolToggle>
              <ToolToggle type="button" $on aria-label="Snap to grid">
                <Svg w={16} h={15}><path d="M2 11V5.500a3.500 3.500 0 0 1 7 0V11" stroke="#ececec" strokeWidth="2.600" /><path d="M14 3v12M5 14h10" stroke="#ececec" strokeWidth="1.500" strokeDasharray="1.500 2" /></Svg>
              </ToolToggle>
              <ToolToggle type="button" aria-label="Design mode">
                <Svg w={14} h={14}><circle cx="7" cy="7" r="4.500" stroke={c.teal} strokeWidth="1.300" /><path d="M7 0v14M0 7h14" stroke={c.teal} strokeWidth="1.300" /><circle cx="7" cy="7" r="1.800" fill="#b8d8e8" /></Svg>
              </ToolToggle>
            </StatusTools>
            <StatusText $gap={7}><Svg w={12} h={12}><path d="M0 1h12M0 6h12M0 11h12" stroke="#d0d0d0" strokeWidth="1.600" strokeDasharray="1.600 3.200" /></Svg></StatusText>
            <StatusText $gap={23}><Chevron /></StatusText>
            <StatusText $gap={16}>Grid C: 4.00 mm</StatusText>
            <StatusText $gap={22}>Logic 1:1</StatusText>
            <StatusText $gap={7}><Svg w={15} h={15}><path d="M2 8a5 5 0 1 1 8 0M9.500 9L14 14" stroke="#d8d8d8" strokeWidth="1.300" /><path d="M1.500 7.500h7v6h-7z" stroke={c.teal} strokeDasharray="2 1" /></Svg></StatusText>
            <Svg w={15} h={15}><path d="M2 9a5.500 5.500 0 1 1 8.500-.5L14 14" stroke="#d8d8d8" strokeWidth="1.300" /><path d="M1 12.500h8" stroke={c.teal} strokeWidth="4" strokeDasharray="2 1" /></Svg>
          </DocStatus>
        </Doc>
      </Body>

      <AppStatus>
        <span>+A1-X200</span>
        <Spacer />
        <StatusText $gap={16}>en_US</StatusText>
        <StatusText $gap={26}># ~</StatusText>
        <Svg w={16} h={14}><path d="M8 0l8 14H0z" fill="#ee8a1d" /><path d="M8 4.500v5M8 11v1.700" stroke="#3a2a10" strokeWidth="1.800" /></Svg>
      </AppStatus>

      <EditCableDialog />
    </Shell>
  );
}
